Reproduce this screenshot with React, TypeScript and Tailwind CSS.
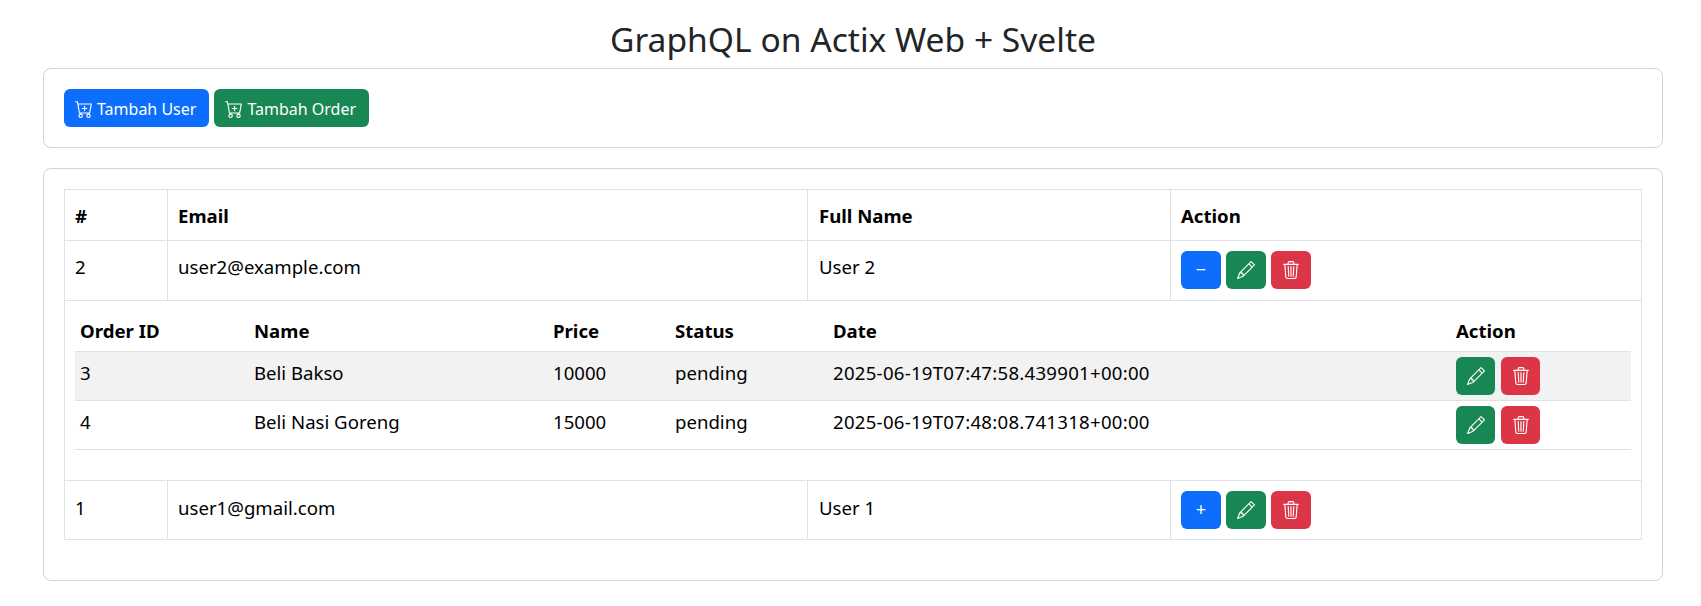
import { BsCartPlus, BsPencil, BsTrash3 } from 'react-icons/bs'

const orders = [
  { id: 3, name: 'Beli Bakso', price: 10000, status: 'pending', date: '2025-06-19T07:47:58.439901+00:00', shade: true },
  { id: 4, name: 'Beli Nasi Goreng', price: 15000, status: 'pending', date: '2025-06-19T07:48:08.741318+00:00', shade: false },
]

function IconBtn({ color, children }: { color: string; children: React.ReactNode }) {
  return (
    <button className={`flex h-[38px] w-[40px] items-center justify-center rounded-[6px] text-white ${color}`}>
      {children}
    </button>
  )
}

function UserActions({ sign }: { sign: string }) {
  return (
    <div className="flex gap-[5px]">
      <IconBtn color="bg-[#0d6efd]">
        <span className="text-[18px]">{sign}</span>
      </IconBtn>
      <IconBtn color="bg-[#198754]">
        <BsPencil className="h-[18px] w-[18px]" />
      </IconBtn>
      <IconBtn color="bg-[#dc3545]">
        <BsTrash3 className="h-[18px] w-[18px]" />
      </IconBtn>
    </div>
  )
}

export default function App() {
  return (
    <div className="min-h-screen bg-white pr-[38px] pl-[43px] text-[18.6px] text-black" style={{ fontFamily: '"Noto Sans", "Open Sans", sans-serif' }}>
      <h1 className="pt-[15px] pb-[5px] text-center text-[33.6px] leading-[48px] font-normal text-[#212529]">
        GraphQL on Actix Web + Svelte
      </h1>

      {/* Toolbar */}
      <div className="mb-[20px] flex gap-[5px] rounded-[8px] border border-[#d3d3d3] p-5 text-base">
        <button className="flex h-[38px] items-center gap-1 rounded-[6px] bg-[#0d6efd] pt-[2px] pr-[13px] pl-[11px] text-white">
          <BsCartPlus className="h-[18px] w-[18px]" />
          Tambah User
        </button>
        <button className="flex h-[38px] items-center gap-1 rounded-[6px] bg-[#198754] pt-[2px] pr-[13px] pl-[11px] text-white">
          <BsCartPlus className="h-[18px] w-[18px]" />
          Tambah Order
        </button>
      </div>

      {/* Users table */}
      <div className="rounded-[8px] border border-[#d3d3d3] px-5 pt-5 pb-10">
        <table className="w-full table-fixed border-collapse">
          <colgroup>
            <col className="w-[103px]" />
            <col className="w-[640px]" />
            <col className="w-[363px]" />
            <col />
          </colgroup>
          <thead>
            <tr className="h-[51px] text-left">
              <th className="border border-[#dee2e6] px-[10px] pt-[2px] font-bold">#</th>
              <th className="border border-[#dee2e6] px-[10px] pt-[2px] font-bold">Email</th>
              <th className="border border-[#dee2e6] pt-[2px] pr-[10px] pl-[11px] font-bold">Full Name</th>
              <th className="border border-[#dee2e6] px-[10px] pt-[2px] font-bold">Action</th>
            </tr>
          </thead>
          <tbody>
            <tr className="h-[60px]">
              <td className="border border-[#dee2e6] px-[10px] pb-[8px]">2</td>
              <td className="border border-[#dee2e6] px-[10px] pb-[8px]">user2@example.com</td>
              <td className="border border-[#dee2e6] pr-[10px] pb-[8px] pl-[11px]">User 2</td>
              <td className="border border-[#dee2e6] px-[10px] pb-[2px]"><UserActions sign="−" /></td>
            </tr>
            <tr>
              <td colSpan={4} className="border border-[#dee2e6] px-[10px] pt-[5px] pb-[30px]">
                <table className="w-full table-fixed border-collapse">
                  <colgroup>
                    <col className="w-[174px]" />
                    <col className="w-[299px]" />
                    <col className="w-[122px]" />
                    <col className="w-[158px]" />
                    <col className="w-[628px]" />
                    <col />
                  </colgroup>
                  <thead>
                    <tr className="h-[45px] border-b border-[#dee2e6] text-left">
                      <th className="px-[5px] pt-[6px] font-bold">Order ID</th>
                      <th className="px-[5px] pt-[6px] font-bold">Name</th>
                      <th className="px-[5px] pt-[6px] font-bold">Price</th>
                      <th className="px-[5px] pt-[6px] font-bold">Status</th>
                      <th className="px-[5px] pt-[6px] font-bold">Date</th>
                      <th className="px-0 pt-[6px] font-bold">Action</th>
                    </tr>
                  </thead>
                  <tbody>
                    {orders.map((o) => (
                      <tr key={o.id} className={`h-[49px] border-b border-[#dee2e6] ${o.shade ? 'bg-[#f2f2f2]' : ''}`}>
                        <td className="px-[5px] pb-[6px]">{o.id}</td>
                        <td className="px-[5px] pb-[6px]">{o.name}</td>
                        <td className="px-[5px] pb-[6px]">{o.price}</td>
                        <td className="px-[5px] pb-[6px]">{o.status}</td>
                        <td className="px-[5px] pb-[6px] tracking-[0.27px]">{o.date}</td>
                        <td className="px-0">
                          <div className="flex gap-[6px]">
                            <button className="flex h-[38px] w-[39px] items-center justify-center rounded-[6px] bg-[#198754] text-white">
                              <BsPencil className="h-[18px] w-[18px]" />
                            </button>
                            <button className="flex h-[38px] w-[39px] items-center justify-center rounded-[6px] bg-[#dc3545] text-white">
                              <BsTrash3 className="h-[18px] w-[18px]" />
                            </button>
                          </div>
                        </td>
                      </tr>
                    ))}
                  </tbody>
                </table>
              </td>
            </tr>
            <tr className="h-[59px]">
              <td className="border border-[#dee2e6] px-[10px] pb-[3px]">1</td>
              <td className="border border-[#dee2e6] px-[10px] pb-[3px]">user1@gmail.com</td>
              <td className="border border-[#dee2e6] pr-[10px] pb-[3px] pl-[11px]">User 1</td>
              <td className="border border-[#dee2e6] px-[10px]"><UserActions sign="+" /></td>
            </tr>
          </tbody>
        </table>
      </div>
    </div>
  )
}
